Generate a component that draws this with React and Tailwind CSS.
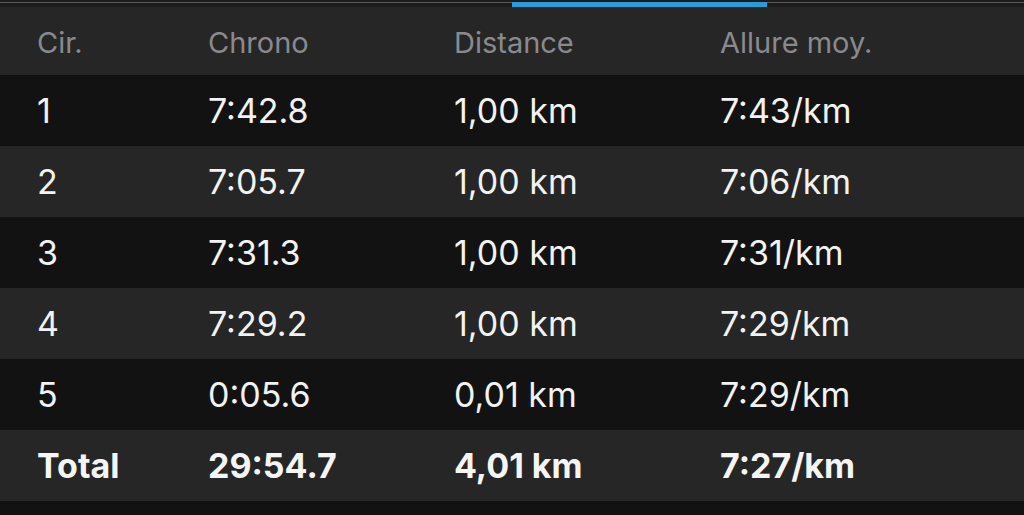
import React from 'react'

const laps = [
  { lap: '1', chrono: '7:42.8', dist: '1,00 km', pace: '7:43/km' },
  { lap: '2', chrono: '7:05.7', dist: '1,00 km', pace: '7:06/km' },
  { lap: '3', chrono: '7:31.3', dist: '1,00 km', pace: '7:31/km' },
  { lap: '4', chrono: '7:29.2', dist: '1,00 km', pace: '7:29/km' },
  { lap: '5', chrono: '0:05.6', dist: '0,01 km', pace: '7:29/km' },
]

function Row({ cells, className }) {
  return (
    <div className={`grid grid-cols-[171px_246px_266px_1fr] items-center pl-[37px] h-[71px] ${className}`}>
      {cells.map((c, i) => (
        <span key={i}>{c}</span>
      ))}
    </div>
  )
}

export default function App() {
  return (
    <div className="w-[1024px] h-[515px] bg-[#121212] overflow-hidden font-['Inter','Liberation_Sans',sans-serif]">
      {/* Tab indicator */}
      <div className="h-[7px] bg-[#1c1c1c] relative">
        <div className="absolute top-[2px] left-0 right-0 h-[1px] bg-[#5a5a5a]" />
        <div className="absolute top-[2px] left-[512px] w-[255px] h-[5px] bg-[#2a9ad8]" />
      </div>

      {/* Header */}
      <div className="grid grid-cols-[171px_246px_266px_1fr] items-center pl-[37px] pt-[3px] h-[68px] bg-[#262626] text-[#8a8a8e] text-[29px] leading-none">
        <span>Cir.</span>
        <span>Chrono</span>
        <span>Distance</span>
        <span>Allure moy.</span>
      </div>

      {laps.map((l, i) => (
        <Row
          key={l.lap}
          cells={[l.lap, l.chrono, l.dist, l.pace]}
          className={`text-[34px] text-[#f2f2f2] ${i % 2 === 0 ? 'bg-[#121212]' : 'bg-[#262626]'}`}
        />
      ))}

      <Row
        cells={['Total', '29:54.7', '4,01 km', '7:27/km']}
        className="text-[34px] font-bold text-[#f5f5f5] bg-[#262626]"
      />
    </div>
  )
}
